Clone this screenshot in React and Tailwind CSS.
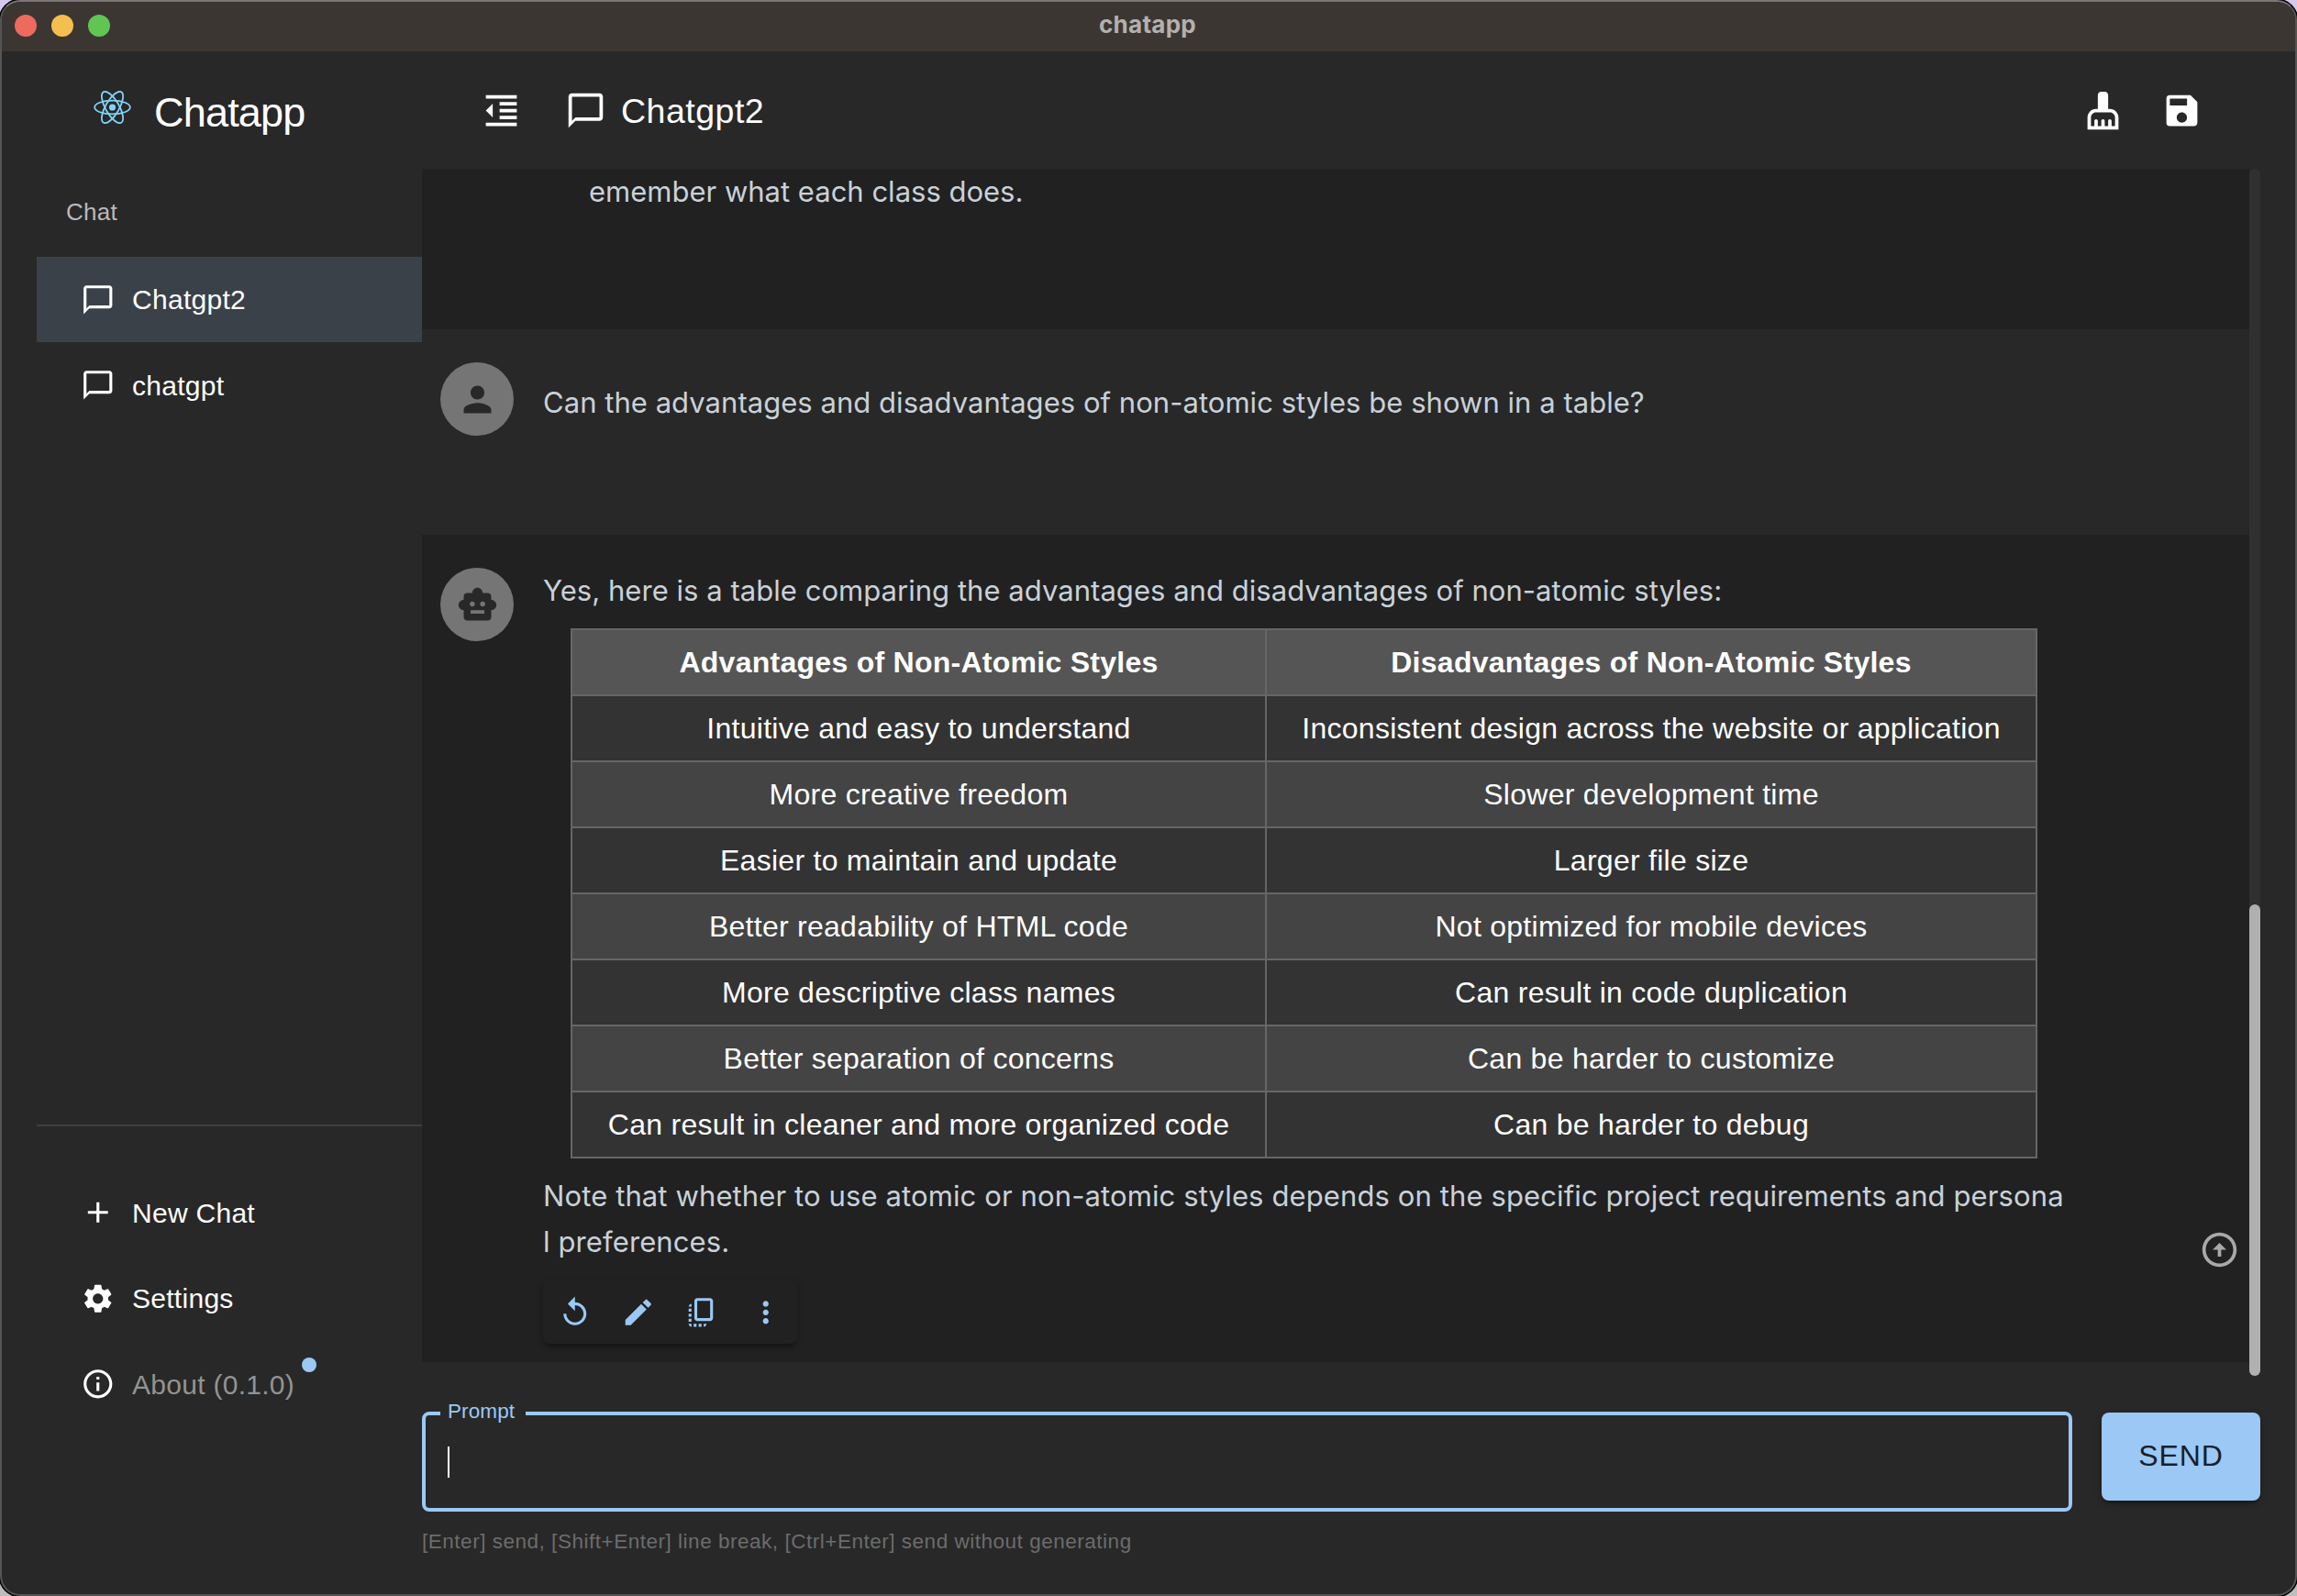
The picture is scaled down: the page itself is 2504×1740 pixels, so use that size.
import {
  MdFormatIndentDecrease,
  MdChatBubbleOutline,
  MdCleaningServices,
  MdSave,
  MdAdd,
  MdSettings,
  MdInfoOutline,
  MdPerson,
  MdSmartToy,
  MdReplay,
  MdEdit,
  MdCopyAll,
  MdMoreVert,
  MdArrowCircleUp,
} from "react-icons/md";

const PROSE =
  "font-['Inter',sans-serif] text-[31px] leading-[50px] text-[#c9d1d9] whitespace-nowrap";

const ROWS = [
  ["Intuitive and easy to understand", "Inconsistent design across the website or application"],
  ["More creative freedom", "Slower development time"],
  ["Easier to maintain and update", "Larger file size"],
  ["Better readability of HTML code", "Not optimized for mobile devices"],
  ["More descriptive class names", "Can result in code duplication"],
  ["Better separation of concerns", "Can be harder to customize"],
  ["Can result in cleaner and more organized code", "Can be harder to debug"],
];

function Atom() {
  return (
    <svg viewBox="-11.5 -10.23 23 20.46" className="mb-[7px] h-9 w-[41px] text-[#7fd5f8]">
      <circle r="2.05" fill="currentColor" />
      <g fill="none" stroke="currentColor" strokeWidth="1">
        <ellipse rx="11" ry="4.2" />
        <ellipse rx="11" ry="4.2" transform="rotate(60)" />
        <ellipse rx="11" ry="4.2" transform="rotate(120)" />
      </g>
    </svg>
  );
}

function TitleBar() {
  return (
    <div className="grid h-[54px] shrink-0 grid-cols-3 items-center bg-[#3c3633]">
      <div className="flex gap-4 pb-0.5 pl-[14px]">
        <span className="size-6 rounded-full bg-[#ed6a5e]" />
        <span className="size-6 rounded-full bg-[#f5bf4f]" />
        <span className="size-6 rounded-full bg-[#61c554]" />
      </div>
      <div className="pr-0.5 pb-1 text-center font-['Inter',sans-serif] text-[26px] leading-8 font-bold tracking-[0.01em] text-[#b4b0ae]">
        chatapp
      </div>
    </div>
  );
}

function NavItem({ icon: Icon, label, selected, muted, dot }) {
  return (
    <div
      className={`mb-[0.5px] flex h-[93px] items-center pl-12 ${selected ? "bg-[#3b4148]" : ""}`}
    >
      <Icon className="size-[37.5px] text-white" />
      <span
        className={`relative ml-[18.5px] text-[30px] leading-[45px] tracking-[0.00938em] ${
          muted ? "text-[#939393]" : "text-white"
        }`}
      >
        {label}
        {dot && (
          <span className="absolute -top-[7px] -right-[24px] size-4 rounded-full bg-[#9bc8f5]" />
        )}
      </span>
    </div>
  );
}

function Sidebar() {
  return (
    <aside className="flex w-[458px] shrink-0 flex-col pl-[38px]">
      <div className="flex h-32 items-center pl-[62px]">
        <Atom />
        <h1 className="mt-[5px] ml-[25px] text-[45px] leading-[60px] tracking-[-0.8px] text-white">
          Chatapp
        </h1>
      </div>
      <div className="flex h-24 items-center pb-0.5 pl-8 text-[26px] tracking-[0.01em] text-[#b9b9b9]">
        Chat
      </div>
      <nav>
        <NavItem icon={MdChatBubbleOutline} label="Chatgpt2" selected />
        <NavItem icon={MdChatBubbleOutline} label="chatgpt" />
      </nav>
      <nav className="mt-auto mb-[182px] border-t-2 border-[#404040] pt-12">
        <NavItem icon={MdAdd} label="New Chat" />
        <NavItem icon={MdSettings} label="Settings" />
        <NavItem icon={MdInfoOutline} label="About (0.1.0)" muted dot />
      </nav>
    </aside>
  );
}

function Header() {
  return (
    <header className="flex h-32 shrink-0 items-center pr-[63px] pl-[64px] text-white">
      <MdFormatIndentDecrease className="size-[45px]" />
      <MdChatBubbleOutline className="ml-[47px] size-[45px]" />
      <h2 className="mt-0.5 ml-4 text-[37.5px] leading-[60px] tracking-[0.5px]">Chatgpt2</h2>
      <MdCleaningServices className="ml-auto size-[45px]" />
      <MdSave className="ml-[41px] size-[45px]" />
    </header>
  );
}

function Avatar({ icon: Icon }) {
  return (
    <div className="mr-8 flex size-20 shrink-0 items-center justify-center rounded-full bg-[#757575] text-[#282828]">
      <Icon className="size-[45px]" />
    </div>
  );
}

function ComparisonTable() {
  const cell = "h-[72px] border-2 border-[#666] p-0 text-center align-middle";
  return (
    <table className="mt-4 ml-[30px] w-[1599px] table-fixed border-collapse text-[32px] leading-[48px] tracking-[0.27px] whitespace-nowrap text-white">
      <colgroup>
        <col className="w-[757px]" />
        <col />
      </colgroup>
      <thead>
        <tr className="bg-[#555]">
          <th className={`${cell} font-bold`}>Advantages of Non-Atomic Styles</th>
          <th className={`${cell} font-bold`}>Disadvantages of Non-Atomic Styles</th>
        </tr>
      </thead>
      <tbody>
        {ROWS.map(([pro, con]) => (
          <tr key={pro} className="odd:bg-[#333] even:bg-[#444]">
            <td className={cell}>{pro}</td>
            <td className={cell}>{con}</td>
          </tr>
        ))}
      </tbody>
    </table>
  );
}

function MessageActions() {
  return (
    <div className="mt-4 grid h-[70px] w-[277px] grid-cols-4 place-items-center rounded-lg bg-[#212121] pt-0.5 text-[#9bc8f5] shadow-[0_6px_4px_-4px_rgba(0,0,0,0.2),0_4px_4px_rgba(0,0,0,0.14),0_2px_10px_rgba(0,0,0,0.12)]">
      <MdReplay className="size-[37.5px]" />
      <MdEdit className="size-[37.5px]" />
      <MdCopyAll className="size-[37.5px]" />
      <MdMoreVert className="size-[37.5px]" />
    </div>
  );
}

function Conversation() {
  return (
    <div className="relative flex h-[1316px] shrink-0">
      <div className="w-[1992px] shrink-0">
        <div className="h-[175px] bg-[#212121] pl-[182px]">
          <p className={PROSE}>emember what each class does.</p>
        </div>
        <div className="flex h-[224px] px-5 pt-9">
          <Avatar icon={MdPerson} />
          <p className={`${PROSE} pt-[19px] tracking-[0.04px]`}>
            Can the advantages and disadvantages of non-atomic styles be shown in a table?
          </p>
        </div>
        <div className="flex h-[902px] bg-[#212121] px-5 pt-9">
          <Avatar icon={MdSmartToy} />
          <div>
            <p className={`${PROSE} tracking-[0.04px]`}>
              Yes, here is a table comparing the advantages and disadvantages of non-atomic styles:
            </p>
            <ComparisonTable />
            <p className={`${PROSE} mt-4 tracking-[0.115px]`}>
              Note that whether to use atomic or non-atomic styles depends on the specific project
              requirements and persona
              <br />l preferences.
            </p>
            <MessageActions />
          </div>
        </div>
      </div>
      <div className="flex w-3 flex-col justify-end rounded-full bg-[#303030]">
        <div className="h-[514px] rounded-full bg-[#b0b0b0]" />
      </div>
      <MdArrowCircleUp className="absolute top-[1156px] right-[22px] size-[45px] text-[#a9a9a9]" />
    </div>
  );
}

function PromptBar() {
  return (
    <div className="mt-10 flex items-start justify-between">
      <div>
        <div className="relative -mt-px h-[109px] w-[1799px] rounded-lg border-4 border-[#9bc8f5] pt-[34px] pl-6">
          <label className="absolute -top-[19px] left-4 w-[93px] bg-[#282828] pl-[8px] text-[22.5px] leading-[30px] tracking-[0.1px] text-[#9bc8f5]">
            Prompt
          </label>
          <div className="h-[34px] w-0.5 bg-white" />
        </div>
        <p className="mt-[18px] text-[22.5px] leading-[30px] tracking-[0.52px] text-[#6c6c6c]">
          [Enter] send, [Shift+Enter] line break, [Ctrl+Enter] send without generating
        </p>
      </div>
      <button className="h-24 w-[173px] rounded-lg bg-[#9bc8f5] pb-[3px] text-[32px] leading-[52px] tracking-[0.02857em] text-[#18202a] shadow-[0_6px_2px_-4px_rgba(0,0,0,0.2),0_4px_4px_rgba(0,0,0,0.14),0_2px_10px_rgba(0,0,0,0.12)]">
        SEND
      </button>
    </div>
  );
}

export default function App() {
  return (
    <div className="h-[1740px] w-[2504px] overflow-hidden bg-linear-to-b from-[#d6c8ec] to-[#bdbdbd] font-['Liberation_Sans',Arial,sans-serif]">
      <div className="flex h-full flex-col overflow-hidden rounded-[22px] border-2 border-[#555] border-t-[#7b7776] bg-[#282828] shadow-[0_0_0_1.5px_#000]">
        <TitleBar />
        <div className="flex min-h-0 grow">
          <Sidebar />
          <main className="flex grow flex-col pr-[38px]">
            <Header />
            <Conversation />
            <PromptBar />
          </main>
        </div>
      </div>
    </div>
  );
}
